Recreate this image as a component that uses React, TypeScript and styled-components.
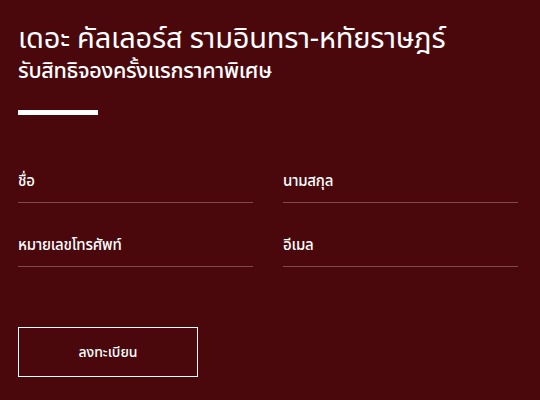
import * as React from 'react';
import styled, { createGlobalStyle } from 'styled-components';

const GlobalStyle = createGlobalStyle`
  html, body {
    margin: 0;
    padding: 0;
    background: #4a080c;
  }
  body {
    font-family: 'Noto Sans Thai', 'Noto Sans', 'Liberation Sans', sans-serif;
    color: #ffffff;
  }
`;

const Page = styled.div`
  width: 540px;
  height: 400px;
  box-sizing: border-box;
  padding: 20px 18px 0;
  background: #4a080c;
  overflow: hidden;
`;

const Title = styled.h1`
  margin: 0;
  font-size: 29px;
  font-weight: 400;
  line-height: 38px;
  letter-spacing: -0.2px;
`;

const Subtitle = styled.h2`
  margin: 0;
  font-size: 21.5px;
  font-weight: 500;
  line-height: 28px;
  letter-spacing: -0.3px;
`;

const Bar = styled.div`
  width: 80px;
  height: 5px;
  margin-top: 24px;
  background: #ffffff;
`;

const FieldGrid = styled.div`
  display: grid;
  grid-template-columns: 235px 235px;
  column-gap: 30px;
  row-gap: 31px;
  margin-top: 55px;
`;

const Field = styled.label`
  display: block;
  padding-bottom: 8px;
  border-bottom: 1px solid rgba(255, 255, 255, 0.28);
  font-size: 15px;
  font-weight: 500;
  line-height: 24px;
  letter-spacing: -0.2px;
`;

const Button = styled.button`
  margin-top: 60px;
  width: 180px;
  height: 50px;
  background: transparent;
  border: 1px solid #ffffff;
  color: #ffffff;
  font-family: inherit;
  font-size: 14px;
  font-weight: 500;
  cursor: pointer;
`;

const fields = ['ชื่อ', 'นามสกุล', 'หมายเลขโทรศัพท์', 'อีเมล'];

const App = () => {
  return (
    <Page>
      <GlobalStyle />
      <Title>เดอะ คัลเลอร์ส รามอินทรา-หทัยราษฎร์</Title>
      <Subtitle>รับสิทธิจองครั้งแรกราคาพิเศษ</Subtitle>
      <Bar />
      <FieldGrid>
        {fields.map((item) => <Field key={item}>{item}</Field>)}
      </FieldGrid>
      <Button type='button'>ลงทะเบียน</Button>
    </Page>
  );
};

export default App;
